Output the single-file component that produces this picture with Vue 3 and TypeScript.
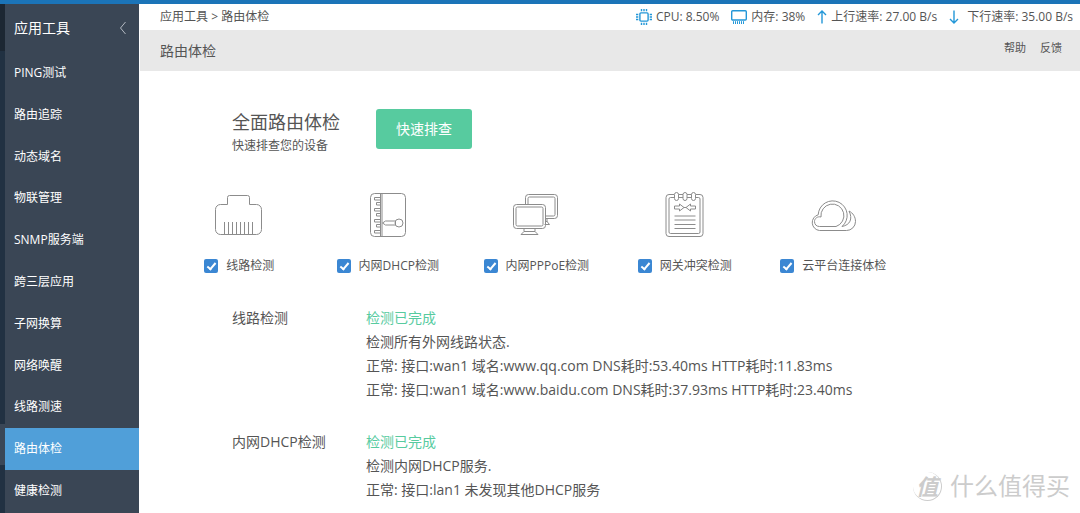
<script setup lang="ts">
import { ref } from 'vue'

interface Check {
  id: string
  label: string
}

interface Result {
  name: string
  lines: string[]
}

const menu: string[] = [
  'PING测试',
  '路由追踪',
  '动态域名',
  '物联管理',
  'SNMP服务端',
  '跨三层应用',
  '子网换算',
  '网络唤醒',
  '线路测速',
  '路由体检',
  '健康检测',
]
const current = ref('路由体检')

const checks: Check[] = [
  { id: 'line', label: '线路检测' },
  { id: 'dhcp', label: '内网DHCP检测' },
  { id: 'pppoe', label: '内网PPPoE检测' },
  { id: 'gateway', label: '网关冲突检测' },
  { id: 'cloud', label: '云平台连接体检' },
]
const selected = ref<string[]>(checks.map((c) => c.id))

const results: Result[] = [
  {
    name: '线路检测',
    lines: [
      '检测所有外网线路状态.',
      '正常: 接口:wan1 域名:www.qq.com DNS耗时:53.40ms HTTP耗时:11.83ms',
      '正常: 接口:wan1 域名:www.baidu.com DNS耗时:37.93ms HTTP耗时:23.40ms',
    ],
  },
  {
    name: '内网DHCP检测',
    lines: ['检测内网DHCP服务.', '正常: 接口:lan1 未发现其他DHCP服务'],
  },
]
</script>

<template>
  <div class="page">
    <div class="rail"><span class="rail-top"></span><span class="rail-mark"></span></div>
    <aside class="sidebar">
      <header class="side-head">
        <h2>应用工具</h2>
        <button class="collapse" type="button" aria-label="收起">
          <svg width="8" height="14" viewBox="0 0 8 14"><path d="M6.5 1 1.5 7l5 6" /></svg>
        </button>
      </header>
      <nav class="menu">
        <a
          v-for="item in menu"
          :key="item"
          href="#"
          :class="{ active: item === current }"
          @click.prevent="current = item"
        >{{ item }}</a>
      </nav>
    </aside>

    <main class="main">
      <div class="status">
        <div class="crumbs"><a href="#">应用工具</a> &gt; <span>路由体检</span></div>
        <div class="stats">
          <span class="stat cpu">
            <svg width="16" height="16" viewBox="0 0 16 16">
              <rect x="3.9" y="3.9" width="8.2" height="8.2" rx="1" />
              <path d="M5.500 0v2.300M8 0v2.300M10.500 0v2.300M5.500 13.700V16M8 13.700V16M10.500 13.700V16M0 5.500h2.300M0 8h2.300M0 10.500h2.300M13.700 5.500H16M13.700 8H16M13.700 10.500H16" />
            </svg>
            CPU: 8.50%
          </span>
          <span class="stat mem">
            <svg width="16" height="14" viewBox="0 0 16 14">
              <rect x=".7" y=".7" width="14.600" height="9.300" rx="1" />
              <path class="pins" d="M2.500 11.200V14M4.500 11.200V14M6.500 11.200V14M8.500 11.200V14M10.500 11.200V14M12.500 11.200V14" />
            </svg>
            内存: 38%
          </span>
          <span class="stat up">
            <svg width="10" height="14" viewBox="0 0 10 14"><path d="M5 13.500V1M1 5l4-4 4 4" /></svg>
            上行速率: 27.00 B/s
          </span>
          <span class="stat down">
            <svg width="10" height="14" viewBox="0 0 10 14"><path d="M5 .5V13M1 9l4 4 4-4" /></svg>
            下行速率: 35.00 B/s
          </span>
        </div>
      </div>

      <div class="title-bar">
        <h1>路由体检</h1>
        <div class="links"><a href="#">帮助</a><a href="#">反馈</a></div>
      </div>

      <section class="intro">
        <div>
          <h2>全面路由体检</h2>
          <p>快速排查您的设备</p>
        </div>
        <button class="run" type="button">快速排查</button>
      </section>

      <section class="checks">
        <div v-for="c in checks" :key="c.id" class="check">
          <svg class="pic" width="48" height="48" viewBox="0 0 48 48">
            <g v-if="c.id === 'line'">
              <path d="M12.500 12.500V5.500a2 2 0 0 1 2-2h18a2 2 0 0 1 2 2v7h7a5 5 0 0 1 5 5v20a5 5 0 0 1-5 5h-36a5 5 0 0 1-5-5v-20a5 5 0 0 1 5-5z" />
              <path d="M9.500 30v12M13.500 30v12M17.500 30v12M21.500 30v12M25.500 30v12M29.500 30v12M33.500 30v12M37.500 30v12" />
            </g>
            <g v-else-if="c.id === 'dhcp'">
              <rect x="6.500" y="1.500" width="35" height="43" rx="4" />
              <path d="M16.500 1.500v43M18 1.500v43" />
              <path d="M16.500 5.500h-6v2.500h6M16.500 10.500h-4v2.500h4M16.500 16.500h-6V19h6M16.500 21.500h-4V24h4M16.500 27.500h-6V30h6M16.500 32.500h-4V35h4M16.500 38.500h-6V41h6" />
              <path d="m18.500 31 3-2h10v4h-10z" />
              <circle cx="35" cy="31" r="4" />
            </g>
            <g v-else-if="c.id === 'pppoe'">
              <path d="M13.500 12V5.500a3 3 0 0 1 3-3h26a3 3 0 0 1 3 3v18a3 3 0 0 1-3 3h-9" />
              <path d="M16 12V6.500a1.500 1.500 0 0 1 1.500-1.500h24a1.500 1.500 0 0 1 1.500 1.500v16a1.500 1.500 0 0 1-1.500 1.500h-8M35 27v2.500l2.500 3h-5M33.500 29.500h2" />
              <rect x="1.500" y="12.500" width="32" height="24" rx="3" />
              <rect x="4" y="15" width="27" height="19" rx="1.500" />
              <path d="M12 36.500v3l-3 3h17l-3-3v-3M12 39.500h11" />
            </g>
            <g v-else-if="c.id === 'gateway'">
              <path d="M13 2.500H8a3 3 0 0 0-3 3v36a3 3 0 0 0 3 3h31a3 3 0 0 0 3-3v-36a3 3 0 0 0-3-3h-4M17.500 2.500H22M26 2.500h4.500" />
              <path d="M13 5.500H9.500a1.500 1.500 0 0 0-1.500 1.500v33a1.500 1.500 0 0 0 1.500 1.500h28a1.500 1.500 0 0 0 1.500-1.500V7a1.500 1.500 0 0 0-1.500-1.500H35M17.500 5.500H22M26 5.500h4.500" />
              <rect x="13.500" y=".5" width="4" height="8" rx="2" />
              <rect x="22" y=".5" width="4" height="8" rx="2" />
              <rect x="30.500" y=".5" width="4" height="8" rx="2" />
              <path d="M13.500 14h5v-2l4.500 3.500-4.500 3.500v-2h-5zM34.500 14h-5v-2L25 15.500l4.500 3.500v-2h5zM23 15.500h2" />
              <path d="M13.500 24h21M13.500 28h21M13.500 32.500h21M13.500 36.500h21" />
            </g>
            <g v-else>
              <path d="M37.500 38.500H10.500a8 8 0 0 1-1.300-15.700A14.500 14.500 0 1 1 33 34.500C41 33 44 27 40 19c4 2 6.500 6 6.500 10.500a9 9 0 0 1-9 9z" />
              <path d="M10.500 34.500H27A11.500 11.500 0 1 0 12 25c-3.500-1-6.500 1.500-6.500 4.500s2 5 5 5z" />
            </g>
          </svg>
          <label><input v-model="selected" type="checkbox" :value="c.id" /><span>{{ c.label }}</span></label>
        </div>
      </section>

      <section class="results">
        <article v-for="r in results" :key="r.name">
          <h3>{{ r.name }}</h3>
          <div>
            <p class="done">检测已完成</p>
            <p v-for="line in r.lines" :key="line">{{ line }}</p>
          </div>
        </article>
      </section>
    </main>

    <div class="mark"><span class="seal">值</span><span>什么值得买</span></div>
  </div>
</template>

<style>
body {
  margin: 0;
  background: #fff;
}
</style>

<style scoped>
.page {
  box-sizing: border-box;
  position: relative;
  display: flex;
  min-height: 100vh;
  overflow: hidden;
  border-top: 4px solid #1b74b8;
  font: 12px/18px "Open Sans", "Noto Sans CJK SC", sans-serif;
  color: #555;
}
h1, h2, h3, p {
  margin: 0;
  font-weight: 400;
}
a {
  color: inherit;
  text-decoration: none;
}
button {
  border: 0;
  font: inherit;
  cursor: pointer;
}
svg {
  fill: none;
  flex: none;
}
.rail {
  display: flex;
  flex-direction: column;
  width: 5px;
  background: #213142;
}
.rail-top {
  height: 47px;
  background: #1c2733;
}
.rail-mark {
  height: 41px;
  margin-top: auto;
  margin-bottom: 48px;
  background: #3a4757;
}
.sidebar {
  box-sizing: border-box;
  display: flex;
  flex-direction: column;
  width: 134px;
  padding-bottom: 1px;
  background: #3a4655;
  color: #fff;
}
.side-head {
  display: flex;
  align-items: center;
  justify-content: space-between;
  height: 48px;
  padding: 0 12px 0 9px;
}
.side-head h2 {
  font-size: 14px;
}
.collapse {
  display: flex;
  padding: 0;
  background: none;
}
.collapse svg {
  stroke: #b4bac2;
}
.menu {
  flex: 1;
  display: flex;
  flex-direction: column;
}
.menu a {
  flex: 1;
  display: flex;
  align-items: center;
  padding-left: 9px;
}
.menu .active {
  background: #509fd9;
}
.main {
  flex: 1;
  min-width: 0;
  margin-left: 1px;
}
.status {
  display: flex;
  align-items: center;
  justify-content: space-between;
  height: 26px;
  padding: 0 7px 0 20px;
}
.stats {
  display: flex;
  gap: 12px;
}
.stat {
  display: flex;
  align-items: center;
  gap: 4px;
}
.stat.down {
  gap: 8px;
}
.stat svg {
  stroke: #2397d8;
  stroke-width: 1.4;
}
.stat .pins {
  stroke-width: 1;
}
.title-bar {
  display: flex;
  align-items: center;
  justify-content: space-between;
  height: 41px;
  padding: 0 18px 0 20px;
  background: #e8e8e8;
}
.title-bar h1 {
  font-size: 14px;
}
.links {
  display: flex;
  gap: 14px;
  font-size: 11px;
  line-height: 22px;
  align-self: flex-start;
  padding-top: 7px;
}
.intro {
  display: flex;
  align-items: flex-start;
  gap: 36px;
  padding: 38px 92px 0;
}
.intro h2 {
  font-size: 18px;
  line-height: 26px;
}
.intro p {
  line-height: 22px;
}
.run {
  width: 96px;
  height: 40px;
  border-radius: 3px;
  background: #57cb9f;
  color: #fff;
  font-size: 14px;
}
.checks {
  display: grid;
  grid-template-columns: repeat(5, 1fr);
  width: 79%;
  margin: 35px 0 0 25px;
}
.check {
  display: flex;
  flex-direction: column;
  align-items: center;
  gap: 17px;
}
.pic {
  stroke: #8c8c8c;
}
.check label {
  display: flex;
  align-items: center;
  gap: 8px;
  white-space: nowrap;
}
.check input {
  appearance: none;
  width: 14px;
  height: 14px;
  margin: 0;
  border-radius: 2px;
  background: #3b87d3;
}
.check input:checked::before {
  content: "";
  display: block;
  width: 3px;
  height: 7px;
  margin: 2px 0 0 5px;
  border: solid #fff;
  border-width: 0 2px 2px 0;
  transform: rotate(40deg);
}
.results {
  display: grid;
  gap: 28px;
  margin: 31px 0 0 92px;
  font-size: 14px;
  line-height: 24px;
}
.results article {
  display: grid;
  grid-template-columns: 134px 1fr;
}
.results h3 {
  font-size: 14px;
}
.results .done {
  color: #57cb9f;
}
.mark {
  position: absolute;
  right: 10px;
  bottom: 11px;
  display: flex;
  align-items: center;
  gap: 8px;
  color: #ccc;
  font-size: 24px;
  line-height: 32px;
}
.seal {
  width: 28px;
  border-right: 1px solid #ccc;
  border-bottom: 1px solid #ccc;
  border-radius: 50%;
  font-size: 22px;
  font-style: italic;
  font-weight: 700;
  line-height: 28px;
  text-align: center;
}
</style>
